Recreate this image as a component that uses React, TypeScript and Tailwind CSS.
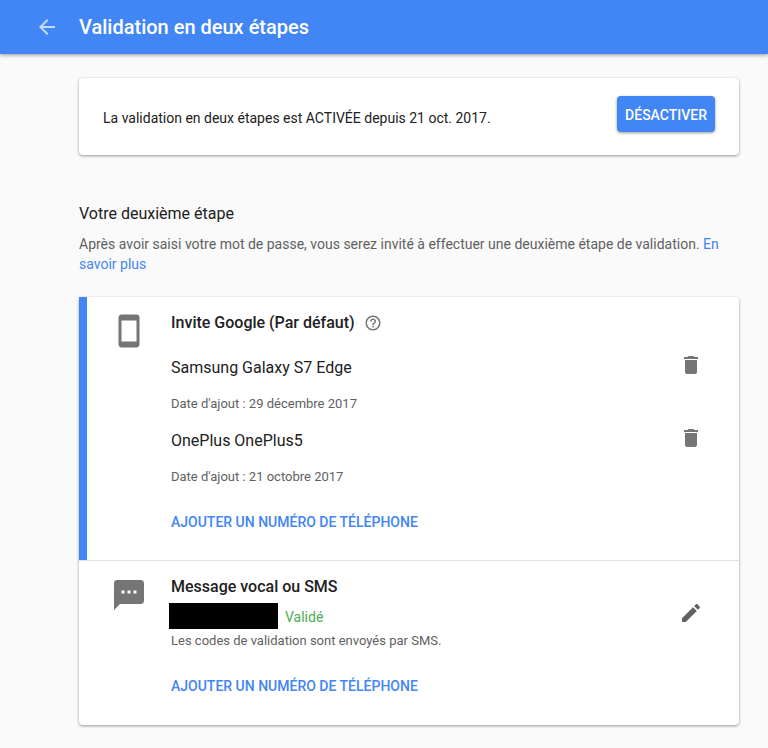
const FONT = 'font-["Roboto",sans-serif]';

function BackIcon() {
  return (
    <svg viewBox="0 0 24 24" className="h-6 w-6 fill-white/70">
      <path d="M20 11H7.83l5.59-5.59L12 4l-8 8 8 8 1.41-1.41L7.83 13H20v-2z" />
    </svg>
  );
}

function PhoneIcon() {
  return (
    <svg viewBox="0 0 24 24" className="h-9 w-9 shrink-0 fill-[#757575]">
      <path d="M17 1.01L7 1c-1.1 0-2 .9-2 2v18c0 1.1.9 2 2 2h10c1.1 0 2-.9 2-2V3c0-1.1-.9-1.99-2-1.99zM17 19H7V5h10v14z" />
    </svg>
  );
}

function SmsIcon() {
  return (
    <svg viewBox="0 0 24 24" className="h-9 w-9 shrink-0 fill-[#757575]">
      <path d="M20 2H4c-1.1 0-1.99.9-1.99 2L2 22l4-4h14c1.1 0 2-.9 2-2V4c0-1.1-.9-2-2-2zM9 11H7V9h2v2zm4 0h-2V9h2v2zm4 0h-2V9h2v2z" />
    </svg>
  );
}

function TrashIcon() {
  return (
    <svg viewBox="0 0 24 24" className="-mt-[3px] h-6 w-6 fill-[#757575]">
      <path d="M6 19c0 1.1.9 2 2 2h8c1.1 0 2-.9 2-2V7H6v12zM19 4h-3.5l-1-1h-5l-1 1H5v2h14V4z" />
    </svg>
  );
}

function PencilIcon() {
  return (
    <svg viewBox="0 0 24 24" className="h-6 w-6 fill-[#616161]">
      <path d="M3 17.25V21h3.75L17.81 9.94l-3.75-3.75L3 17.25zM20.71 7.04c.39-.39.39-1.02 0-1.41l-2.34-2.34c-.39-.39-1.02-.39-1.41 0l-1.83 1.83 3.75 3.75 1.83-1.83z" />
    </svg>
  );
}

function HelpIcon() {
  return (
    <svg viewBox="0 0 24 24" className="h-[18px] w-[18px] fill-[#757575]">
      <path d="M11 18h2v-2h-2v2zm1-16C6.48 2 2 6.48 2 12s4.48 10 10 10 10-4.48 10-10S17.52 2 12 2zm0 18c-4.41 0-8-3.59-8-8s3.59-8 8-8 8 3.59 8 8-3.59 8-8 8zm0-14c-2.21 0-4 1.79-4 4h2c0-1.1.9-2 2-2s2 .9 2 2c0 2-3 1.75-3 5h2c0-2.25 3-2.5 3-5 0-2.21-1.79-4-4-4z" />
    </svg>
  );
}

const devices = [
  { name: 'Samsung Galaxy S7 Edge', added: "Date d'ajout : 29 décembre 2017" },
  { name: 'OnePlus OnePlus5', added: "Date d'ajout : 21 octobre 2017" },
];

function AddPhoneLink() {
  return (
    <div className="text-sm leading-5 font-medium text-[#4285f4]">AJOUTER UN NUMÉRO DE TÉLÉPHONE</div>
  );
}

export default function App() {
  return (
    <div className={`${FONT} h-[748px] overflow-hidden bg-[#fafafa] text-[#212121]`}>
      <header className="relative flex h-[54px] items-center gap-5 bg-[#4285f4] pl-[35px] shadow-[0_1px_4px_rgba(0,0,0,0.4)]">
        <BackIcon />
        <h1 className="text-xl font-medium text-white">Validation en deux étapes</h1>
      </header>

      <main className="pt-6 pr-[29px] pl-[79px]">
        <section className="flex h-[77px] items-start justify-between rounded-sm bg-white pt-[18px] pr-6 pl-6 shadow-[0_1px_3px_rgba(0,0,0,0.4)]">
          <p className="pt-3 text-sm leading-5 text-[#212121]">
            La validation en deux étapes est ACTIVÉE depuis 21 oct. 2017.
          </p>
          <button className="h-9 rounded-sm bg-[#4285f4] px-2 pt-[2px] text-sm font-medium text-white shadow-[0_1px_3px_rgba(0,0,0,0.4)]">
            DÉSACTIVER
          </button>
        </section>

        <h2 className="mt-[49px] text-base leading-5 text-[#212121]">Votre deuxième étape</h2>
        <p className="mt-[10px] text-sm leading-5 text-[#616161]">
          Après avoir saisi votre mot de passe, vous serez invité à effectuer une deuxième étape de validation.{' '}
          <span className="text-[#4285f4]">En</span> <span className="text-[#4285f4]">savoir plus</span>
        </p>

        <section className="mt-[23px] rounded-sm bg-white shadow-[0_1px_3px_rgba(0,0,0,0.4)]">
          <div className="flex h-[263px] gap-6 border-l-8 border-[#4285f4] pt-4 pr-9 pl-6">
            <PhoneIcon />
            <div className="flex-1">
              <div className="flex items-center gap-[9px]">
                <span className="text-base leading-5 font-medium">Invite Google (Par défaut)</span>
                <HelpIcon />
              </div>
              <div className="mt-[23px] flex flex-col gap-4">
                {devices.map((device) => (
                  <div key={device.name} className="flex justify-between">
                    <div>
                      <div className="text-base leading-6">{device.name}</div>
                      <div className="mt-[15px] text-[13px] leading-[18px] text-[#616161]">{device.added}</div>
                    </div>
                    <TrashIcon />
                  </div>
                ))}
              </div>
              <div className="mt-[26px]">
                <AddPhoneLink />
              </div>
            </div>
          </div>

          <div className="flex h-[165px] gap-6 border-t border-[#e0e0e0] pt-4 pr-9 pl-8">
            <SmsIcon />
            <div className="flex flex-1 justify-between">
              <div>
                <div className="text-base leading-5 font-medium">Message vocal ou SMS</div>
                <div className="mt-[6px] flex items-center gap-[7px]">
                  <div className="-ml-[2px] h-[26px] w-[109px] bg-black" />
                  <span className="pt-[2px] text-sm text-[#4caf50]">Validé</span>
                </div>
                <div className="mt-[3px] text-[13px] leading-[18px] text-[#616161]">
                  Les codes de validation sont envoyés par SMS.
                </div>
                <div className="mt-[26px]">
                  <AddPhoneLink />
                </div>
              </div>
              <div className="pt-6">
                <PencilIcon />
              </div>
            </div>
          </div>
        </section>
      </main>
    </div>
  );
}
